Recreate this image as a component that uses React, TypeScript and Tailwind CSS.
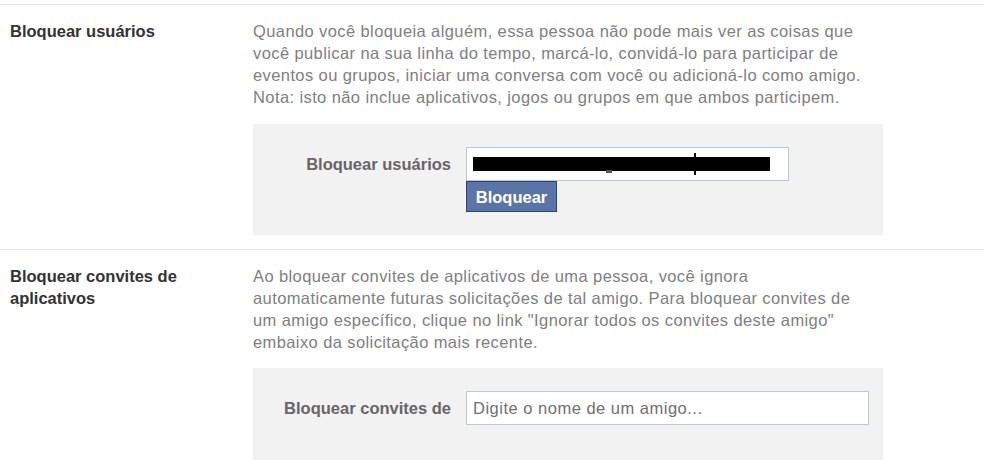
export default function App() {
  return (
    <div className="w-[984px] h-[460px] overflow-hidden bg-white font-['Liberation_Sans',Arial,sans-serif] text-[16.5px] leading-[22px]">
      <div className="h-[4px]" />

      {/* Bloquear usuários */}
      <section className="flex border-t border-[#e5e5e5] pt-[15px] pb-[14px]">
        <div className="w-[253px] shrink-0 pl-[10px] font-bold text-[#333333]">
          Bloquear usuários
        </div>
        <div className="w-[630px]">
          <p className="text-[#808080] tracking-[0.4px]">
            Quando você bloqueia alguém, essa pessoa não pode mais ver as coisas que
            <br />
            você publicar na sua linha do tempo, marcá-lo, convidá-lo para participar de
            <br />
            eventos ou grupos, iniciar uma conversa com você ou adicioná-lo como amigo.
            <br />
            Nota: isto não inclue aplicativos, jogos ou grupos em que ambos participem.
          </p>
          <div className="mt-[16px] h-[111px] bg-[#f2f2f2] pt-[23px]">
            <div className="flex items-start">
              <div className="w-[198px] shrink-0 text-right font-bold text-[#666666] leading-[34px]">
                Bloquear usuários
              </div>
              <div className="ml-[15px] flex flex-col items-start">
                <div className="relative h-[34px] w-[323px] border border-[#bdc7d8] bg-white">
                  <div className="absolute left-[6px] top-[9px] h-[14px] w-[297px] bg-black" />
                  <div className="absolute left-[227px] top-[5px] h-[22px] w-[2px] bg-black" />
                  <div className="absolute left-[139px] top-[22px] h-[3px] w-[6px] bg-[#555555]" />
                </div>
                <button className="h-[31px] w-[91px] border border-[#29447e] bg-[#5b74a8] font-bold text-white">
                  Bloquear
                </button>
              </div>
            </div>
          </div>
        </div>
      </section>

      {/* Bloquear convites de aplicativos */}
      <section className="flex border-t border-[#e5e5e5] pt-[15px]">
        <div className="w-[253px] shrink-0 pl-[10px] pr-[70px] font-bold text-[#333333]">
          Bloquear convites de aplicativos
        </div>
        <div className="w-[630px]">
          <p className="text-[#808080] tracking-[0.4px]">
            Ao bloquear convites de aplicativos de uma pessoa, você ignora
            <br />
            automaticamente futuras solicitações de tal amigo. Para bloquear convites de
            <br />
            um amigo específico, clique no link "Ignorar todos os convites deste amigo"
            <br />
            embaixo da solicitação mais recente.
          </p>
          <div className="mt-[15px] h-[111px] bg-[#f2f2f2] pt-[23px]">
            <div className="flex items-start">
              <div className="w-[198px] shrink-0 text-right font-bold text-[#666666] leading-[34px]">
                Bloquear convites de
              </div>
              <div className="ml-[15px] flex h-[34px] w-[403px] items-center border border-[#bdc7d8] bg-white pl-[6px] text-[#707070] tracking-[0.5px]">
                Digite o nome de um amigo...
              </div>
            </div>
          </div>
        </div>
      </section>
    </div>
  );
}
